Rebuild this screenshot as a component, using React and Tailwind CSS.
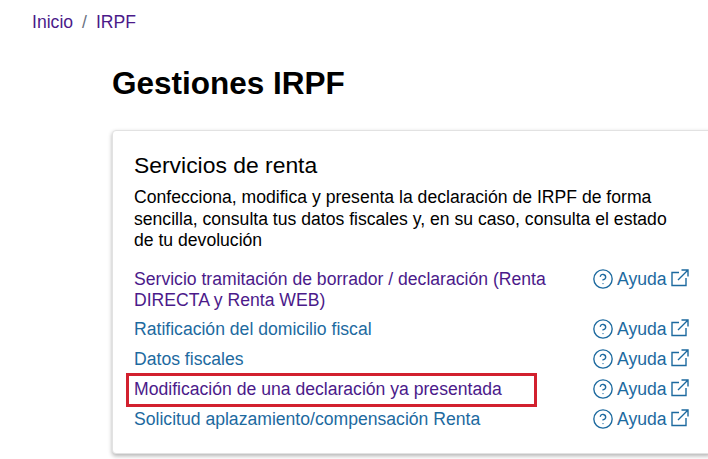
import { CircleHelp } from 'lucide-react';

const rows = [
  { label: 'Ratificación del domicilio fiscal', color: 'text-[#1d6a9f]' },
  { label: 'Datos fiscales', color: 'text-[#1d6a9f]' },
  { label: 'Modificación de una declaración ya presentada', color: 'text-[#4b1a8a]', marked: true },
  { label: 'Solicitud aplazamiento/compensación Renta', color: 'text-[#1d6a9f]' },
];

function Help() {
  return (
    <div className="flex items-center w-[98px] h-[30px] text-[#1d6a9f] shrink-0">
      <CircleHelp className="w-[22px] h-[22px] mr-[3px] mb-[2px]" strokeWidth={1.5} />
      <span>Ayuda</span>
      <svg viewBox="0 0 18 18" fill="none" stroke="currentColor" strokeWidth="1.4" className="w-[18px] h-[18px] ml-[4px] mb-[3px]">
        <path d="M8 3.5H1v13h14V9" />
        <path d="M7 11 17 1M10.5 1H17v6.5" />
      </svg>
    </div>
  );
}

export default function App() {
  return (
    <div className="w-[708px] h-[459px] overflow-hidden bg-white text-black font-['Liberation_Sans',Arial,sans-serif] text-[17.6px]">
      <nav className="flex items-center h-[20px] mt-[12px] ml-[32px] text-[#4b1a8a]">
        <a>Inicio</a>
        <span className="mx-[9px] text-gray-500">/</span>
        <a>IRPF</a>
      </nav>
      <div className="ml-[112px] w-[600px]">
        <h1 className="mt-[31px] text-[31.5px] leading-[40px] font-bold">Gestiones IRPF</h1>
        <div className="relative mt-[27px] h-[324px] rounded-[4px] bg-white border border-[#e2e2e2] shadow-[0_2px_4px_rgba(0,0,0,0.3)] pt-[20px] pl-[21px]">
          <h2 className="text-[22.9px] leading-[28px]">Servicios de renta</h2>
          <p className="mt-[8px] w-[545px] leading-[21.5px]">
            Confecciona, modifica y presenta la declaración de IRPF de forma sencilla, consulta tus datos fiscales y, en su caso, consulta el estado de tu devolución
          </p>
          <div className="mt-[13px] w-[556px]">
            <div className="flex justify-between leading-[21px] mb-[4px]">
              <a className="w-[420px] text-[#4b1a8a] pt-[4px]">Servicio tramitación de borrador / declaración (Renta DIRECTA y Renta WEB)</a>
              <Help />
            </div>
            {rows.map((row) => (
              <div key={row.label} className="relative flex justify-between items-center h-[30px]">
                <a className={row.color}>{row.label}</a>
                <Help />
                {row.marked && (
                  <span className="absolute left-[-8px] top-[-2px] w-[411px] h-[34px] border-[3px] border-[#d2202e]" />
                )}
              </div>
            ))}
          </div>
        </div>
      </div>
    </div>
  );
}
